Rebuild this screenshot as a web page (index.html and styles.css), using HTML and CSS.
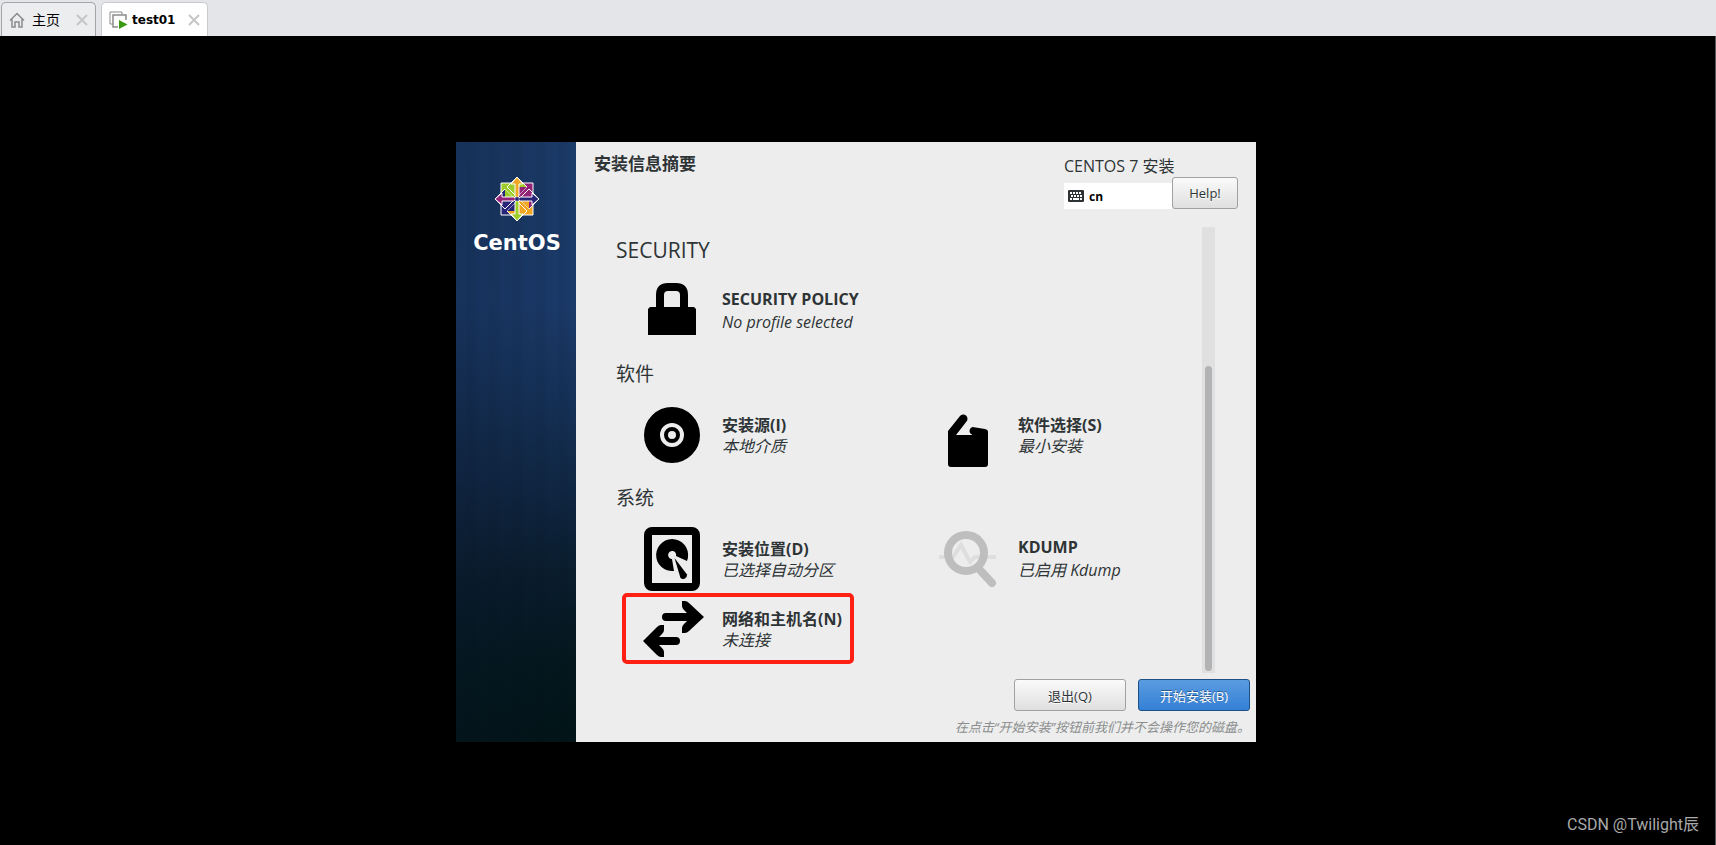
FILE: index.html
```
<!DOCTYPE html>
<html lang="zh-CN">
<head>
  <meta charset="utf-8">
  <title>test01</title>
  <link rel="stylesheet" href="styles.css">
</head>
<body>
  <nav class="tabs">
    <div class="tab">
      <svg width="16" height="16" viewBox="0 0 16 16" fill="none" stroke="#8c8c8c" stroke-width="1.5">
        <path d="M1 8.5L8 1.5l7 7M3 7v8h3v-5h4v5h3V7"/>
      </svg>
      <a href="#">主页</a>
      <button type="button" class="close" aria-label="关闭">
        <svg width="12" height="12" viewBox="0 0 12 12" stroke="#c6c6c6" stroke-width="2"><path d="M1 1l10 10M11 1L1 11"/></svg>
      </button>
    </div>
    <div class="tab active">
      <svg width="19" height="18" viewBox="0 0 19 18">
        <path d="M4 13H1V1h12v3" fill="none" stroke="#8c8c8c"/>
        <path d="M9 16H4V4h13v5" fill="none" stroke="#8c8c8c" stroke-width="1.5"/>
        <path d="M10 9l8.500 4.500L10 18z" fill="#3c9a12"/>
      </svg>
      <a href="#">test01</a>
      <button type="button" class="close" aria-label="关闭">
        <svg width="12" height="12" viewBox="0 0 12 12" stroke="#c6c6c6" stroke-width="2"><path d="M1 1l10 10M11 1L1 11"/></svg>
      </button>
    </div>
  </nav>

  <div class="screen">
    <div class="installer">
      <aside class="sidebar">
        <svg width="46" height="46" viewBox="-23 -23 46 46" stroke="#fff" stroke-width="1">
          <path d="M-16-16H0V0h-16z" fill="#9ccd2a"/>
          <path d="M0-16h16V0H0z" fill="#932279"/>
          <path d="M-16 0H0v16h-16z" fill="#262577"/>
          <path d="M0 0h16v16H0z" fill="#efa724"/>
          <path d="M0-22L10-12 0-2-10-12z" fill="#9ccd2a"/>
          <path d="M0-12l10 0L0-2z" fill="#932279" stroke="none"/>
          <path d="M22 0L12 10 2 0l10-10z" fill="#932279"/>
          <path d="M12 0v10L2 0z" fill="#efa724" stroke="none"/>
          <path d="M0 22l-10-10L0 2l10 10z" fill="#efa724"/>
          <path d="M0 12h-10L0 2z" fill="#262577" stroke="none"/>
          <path d="M-22 0l10-10L-2 0l-10 10z" fill="#262577"/>
          <path d="M-12 0v-10L-2 0z" fill="#9ccd2a" stroke="none"/>
          <path d="M-2-3v-12h-4l6-7 6 7H2v12L0-1z" fill="#efa724"/>
          <path d="M3-2h12v-4l7 6-7 6V2H3L1 0z" fill="#262577"/>
          <path d="M2 3v12h4l-6 7-6-7h4V3l2-2z" fill="#9ccd2a"/>
          <path d="M-3 2h-12v4l-7-6 7-6v4h12l2 2z" fill="#932279"/>
          <path d="M-2-2h4v4h-4z" fill="#262577" stroke-width=".5"/>
        </svg>
        <span class="brand">CentOS</span>
      </aside>

      <main class="main">
        <header class="header">
          <h1>安装信息摘要</h1>
          <div class="product">
            <p>CENTOS 7 安装</p>
            <div class="product-row">
              <div class="layout">
                <svg width="16" height="12" viewBox="0 0 16 12">
                  <rect width="16" height="12" rx="1" fill="#2e3436"/>
                  <path d="M2 3h12M3 6h12" stroke="#fff" stroke-width="2" stroke-dasharray="2 1"/>
                  <path d="M2 9h2M5 9h6M12 9h2" stroke="#fff" stroke-width="2"/>
                </svg>
                <span>cn</span>
              </div>
              <button type="button" class="btn help">Help!</button>
            </div>
          </div>
        </header>

        <div class="scroller">
          <div class="content">
            <section>
              <h2 class="latin">SECURITY</h2>
              <div class="spokes">
                <button type="button" class="spoke latin">
                  <svg width="64" height="64" viewBox="0 0 64 64">
                    <path d="M10 28h6V16Q16 4 28 4h8q12 0 12 12v12h6l2 2v26H8V30zM24 28h16V16q0-4-4-4h-8q-4 0-4 4z" fill-rule="evenodd"/>
                  </svg>
                  <span><b>SECURITY POLICY</b><i>No profile selected</i></span>
                </button>
              </div>
            </section>
            <section>
              <h2>软件</h2>
              <div class="spokes">
                <button type="button" class="spoke">
                  <svg width="64" height="64" viewBox="0 0 64 64" fill="none" stroke="#000">
                    <circle cx="32" cy="32" r="20" stroke-width="16"/>
                    <circle cx="32" cy="32" r="6" stroke-width="4"/>
                  </svg>
                  <span><b>安装源(I)</b><i>本地介质</i></span>
                </button>
                <button type="button" class="spoke">
                  <svg width="64" height="64" viewBox="0 0 64 64">
                    <path d="M12 28l12-15a4 4 0 0 1 6.500 5.500L20 32h16.500l-2-1.500a4 4 0 0 1 2-6.500L49 26q3 .5 3 3v32q0 3-3 3H15q-3 0-3-3z"/>
                  </svg>
                  <span><b>软件选择(S)</b><i>最小安装</i></span>
                </button>
              </div>
            </section>
            <section>
              <h2>系统</h2>
              <div class="spokes">
                <button type="button" class="spoke">
                  <svg width="64" height="64" viewBox="0 0 64 64">
                    <rect x="8" y="4" width="48" height="56" rx="4" fill="none" stroke="#000" stroke-width="8"/>
                    <path d="M34 44A16 16 0 1 1 47 34L36 29a4 4 0 1 0-4 3z"/>
                    <path d="M34.500 31l12.500 16.500a4 4 0 0 1-6.500 3.500z"/>
                  </svg>
                  <span><b>安装位置(D)</b><i>已选择自动分区</i></span>
                </button>
                <button type="button" class="spoke latin">
                  <svg width="64" height="64" viewBox="0 0 64 64" fill="none">
                    <path d="M3 30h14l8-12 9 17 5-5h21" stroke="#dedede" stroke-width="4"/>
                    <circle cx="30" cy="26" r="18" stroke="#bebebe" stroke-width="8"/>
                    <path d="M43 42l13 14" stroke="#bebebe" stroke-width="8" stroke-linecap="round"/>
                  </svg>
                  <span><b>KDUMP</b><i>已启用 Kdump</i></span>
                </button>
                <button type="button" class="spoke marked">
                  <svg width="64" height="64" viewBox="0 0 64 64">
                    <path d="M42 4h3q2 0 4 2l15 14-15 14q-2 2-4 2h-3v-5q0-2 2-4l3-3H26a4 4 0 0 1 0-8h21l-3-3q-2-2-2-4z"/>
                    <path d="M24 28h-3q-2 0-4 2L3 44l14 14q2 2 4 2h3v-5q0-2-2-4l-3-3h17a4 4 0 0 0 0-8H19l3-3q2-2 2-4z"/>
                  </svg>
                  <span><b>网络和主机名(N)</b><i>未连接</i></span>
                </button>
              </div>
            </section>
          </div>
          <div class="track"><div class="thumb"></div></div>
        </div>

        <footer class="footer">
          <div class="actions">
            <button type="button" class="btn">退出(Q)</button>
            <button type="button" class="btn primary">开始安装(B)</button>
          </div>
          <p>在点击“开始安装”按钮前我们并不会操作您的磁盘。</p>
        </footer>
      </main>
    </div>
    <span class="watermark">CSDN @Twilight辰</span>
  </div>
</body>
</html>
```
FILE: styles.css
```
*,
*::after {
  box-sizing: border-box;
}

body {
  margin: 0;
  min-height: 100vh;
  display: flex;
  flex-direction: column;
  background: #000;
  color: #2e3436;
  font-family: "Open Sans", "Noto Sans CJK SC", sans-serif;
}

h1, h2, p {
  margin: 0;
  font-weight: normal;
}

button {
  font-family: inherit;
  color: inherit;
  cursor: pointer;
}

/* tab bar */
.tabs {
  display: flex;
  gap: 5px;
  height: 36px;
  padding: 2px 1px 0;
  background: #e3e5e8;
}

.tab {
  display: flex;
  align-items: center;
  gap: 7px;
  padding: 0 7px;
  border: 1px solid #a3a5a8;
  border-bottom: none;
  border-radius: 5px 5px 0 0;
  background: #ebedef;
}

.tab a {
  color: #000;
  font-size: 14px;
  line-height: 20px;
  text-decoration: none;
}

.tab.active {
  gap: 4px;
  background: #fff;
  border-color: #c8cacc;
}

.tab.active a {
  font-family: "DejaVu Sans", sans-serif;
  font-size: 12px;
  font-weight: bold;
}

.close {
  display: flex;
  margin-left: 9px;
  padding: 0;
  border: none;
  background: none;
}

/* guest screen */
.screen {
  position: relative;
  flex: 1;
  display: flex;
  align-items: center;
  justify-content: center;
  padding: 3px 3px 0 0;
  border-right: 1px solid #55585c;
}

.installer {
  display: flex;
  width: 800px;
  max-width: 100%;
  background: #ededed;
}

.sidebar {
  display: flex;
  flex-direction: column;
  align-items: center;
  flex: 0 0 120px;
  padding: 34px 0 0 2px;
  background:
    repeating-linear-gradient(90deg, rgba(0, 0, 0, 0) 0 8px, rgba(0, 10, 20, .05) 12px 18px, rgba(0, 0, 0, 0) 23px),
    linear-gradient(90deg, rgba(10, 20, 40, .25), rgba(0, 0, 0, 0)),
    linear-gradient(#1b3b69, #1b3b6b 27%, #163259 42%, #102743 58%, #091d2d 72%, #03171d 87%, #021417);
}

.brand {
  color: #fff;
  font-family: "DejaVu Sans", sans-serif;
  font-size: 21px;
  font-weight: bold;
  line-height: 42px;
}

.main {
  flex: 1;
  min-width: 0;
}

.header {
  display: flex;
  justify-content: space-between;
  height: 85px;
  padding: 10px 18px 0;
}

.header h1 {
  font-size: 17px;
  font-weight: bold;
  line-height: 24px;
}

.product p {
  font-size: 16px;
  line-height: 20px;
  padding: 4px 0 1px;
}

.product-row {
  display: flex;
  align-items: flex-end;
}

.layout {
  display: flex;
  align-items: center;
  gap: 5px;
  width: 108px;
  height: 26px;
  padding-left: 4px;
  background: #fff;
  color: #000;
  font-size: 12px;
  font-weight: bold;
}

.btn {
  width: 112px;
  height: 32px;
  padding: 0;
  border: 1px solid #a1a1a1;
  border-radius: 3px;
  background: linear-gradient(#fafafa, #dfdfdf);
  font-size: 13px;
  text-shadow: 0 1px #fff;
}

.help {
  width: 66px;
}

.primary {
  border-color: #1c5187;
  background: linear-gradient(#5a9ce0, #3480d6);
  color: #fff;
  text-shadow: 0 -1px rgba(0, 0, 0, .4);
}

/* hub */
.scroller {
  display: flex;
  padding-right: 41px;
}

.content {
  display: flex;
  flex-direction: column;
  gap: 16px;
  flex: 1;
  padding: 8px 0 12px 40px;
}

.content h2 {
  margin-bottom: 14px;
  font-size: 19px;
  line-height: 30px;
}

.content h2.latin {
  font-size: 21px;
}

.spokes {
  display: grid;
  grid-template-columns: 1fr 1fr;
  gap: 6px 30px;
  padding-left: 24px;
}

.spoke {
  position: relative;
  display: flex;
  align-items: center;
  gap: 18px;
  padding: 0;
  border: none;
  background: none;
  font-size: 16px;
  line-height: 21px;
  text-align: left;
  white-space: nowrap;
}

.spoke span {
  padding-top: 2px;
}

.spoke b,
.spoke i {
  display: block;
}

.spoke.latin {
  line-height: 23px;
}

.spoke.latin span {
  padding-top: 0;
}

/* highlight frame round the network entry */
.marked::after {
  content: "";
  position: absolute;
  inset: -4px auto -3px -18px;
  width: 232px;
  border: 4px solid #fe2012;
  border-radius: 5px;
}

.track {
  display: flex;
  width: 13px;
  padding: 139px 3px 2px;
  background: #e0e0e0;
}

.thumb {
  flex: 1;
  border-radius: 4px;
  background: #b2b3b5;
}

.footer {
  padding: 6px 6px 5px;
  text-align: right;
}

.actions {
  display: flex;
  justify-content: flex-end;
  gap: 12px;
  margin-bottom: 6px;
}

.footer p {
  color: #8b8d8e;
  font-size: 13px;
  font-style: italic;
  line-height: 20px;
}

.watermark {
  position: absolute;
  right: 16px;
  bottom: 8px;
  color: #a9a9a9;
  font-family: Roboto, "Noto Sans CJK SC", sans-serif;
  font-size: 16px;
  line-height: 24px;
}
```
